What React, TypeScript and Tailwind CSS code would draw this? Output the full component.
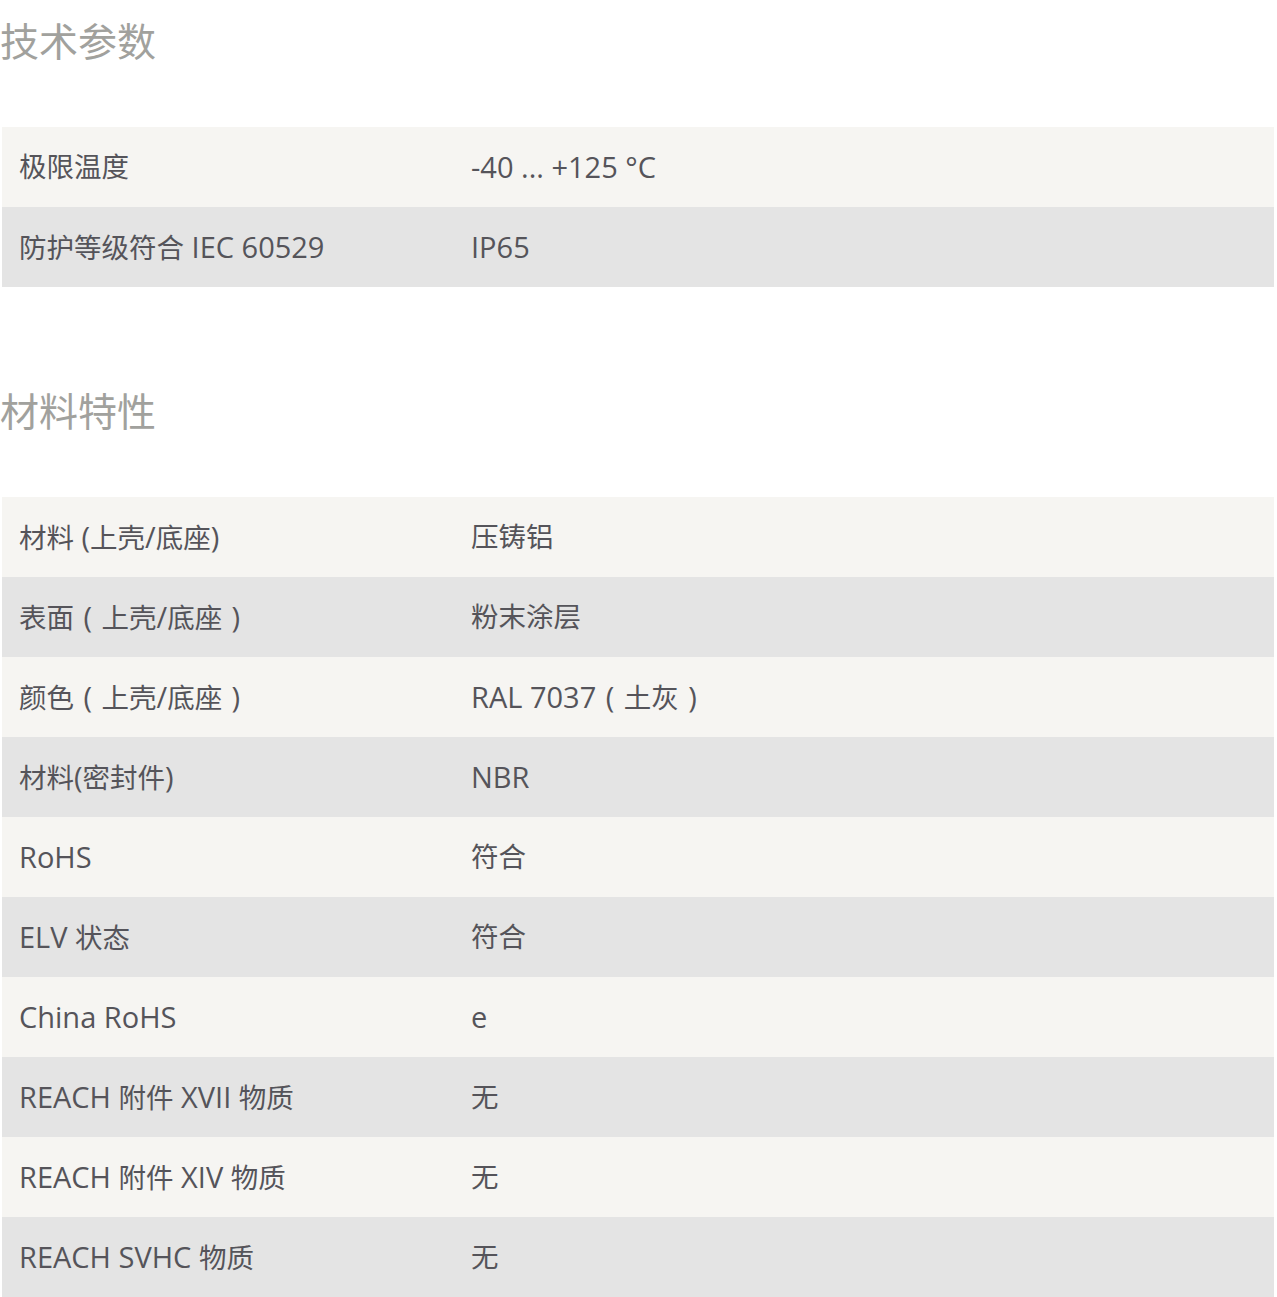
const sections: { title: string; rows: [string, string][] }[] = [
  {
    title: "技术参数",
    rows: [
      ["极限温度", "-40 ... +125 °C"],
      ["防护等级符合 IEC 60529", "IP65"],
    ],
  },
  {
    title: "材料特性",
    rows: [
      ["材料 (上壳/底座)", "压铸铝"],
      ["表面（上壳/底座）", "粉末涂层"],
      ["颜色（上壳/底座）", "RAL 7037（土灰）"],
      ["材料(密封件)", "NBR"],
      ["RoHS", "符合"],
      ["ELV 状态", "符合"],
      ["China RoHS", "e"],
      ["REACH 附件 XVII 物质", "无"],
      ["REACH 附件 XIV 物质", "无"],
      ["REACH SVHC 物质", "无"],
    ],
  },
];

// latin runs are set a touch larger than the CJK ones, like the original font mix;
// full-width brackets sit centred in their em box
function Cell({ text }: { text: string }) {
  const parts = text.split(/([（）]|[\u4e00-\u9fff]+)/).filter(Boolean);
  return (
    <>
      {parts.map((p, i) => {
        if (p === "（" || p === "）")
          return (
            <span key={i} className="inline-block w-[27.5px] text-center text-[29px]">
              {p === "（" ? "(" : ")"}
            </span>
          );
        if (/[\u4e00-\u9fff]/.test(p))
          return (
            <span key={i} className="text-[27.5px]">
              {p}
            </span>
          );
        return (
          <span key={i} className="text-[29px]">
            {p}
          </span>
        );
      })}
    </>
  );
}

function SpecTable({ title, rows }: { title: string; rows: [string, string][] }) {
  return (
    <section className="mb-[83px]">
      <h2 className="h-[82px] leading-[82px] mb-[45px] text-[39px] text-[#a1a19d] font-normal">{title}</h2>
      <div className="ml-[2px] w-[1272px]">
        {rows.map(([label, value], i) => (
          <div
            key={label}
            className={`grid grid-cols-[452px_1fr] h-[80px] items-center pt-[4px] leading-[40px] text-[#55545a] ${
              i % 2 === 0 ? "bg-[#f6f5f2]" : "bg-[#e4e4e4]"
            }`}
          >
            <div className="pl-[17px] whitespace-nowrap">
              <Cell text={label} />
            </div>
            <div className="pl-[17px] whitespace-nowrap">
              <Cell text={value} />
            </div>
          </div>
        ))}
      </div>
    </section>
  );
}

export default function App() {
  return (
    <div
      className="w-[1277px] bg-white"
      style={{ fontFamily: '"Open Sans", "Noto Sans CJK SC", sans-serif' }}
    >
      {sections.map((s) => (
        <SpecTable key={s.title} title={s.title} rows={s.rows} />
      ))}
    </div>
  );
}
